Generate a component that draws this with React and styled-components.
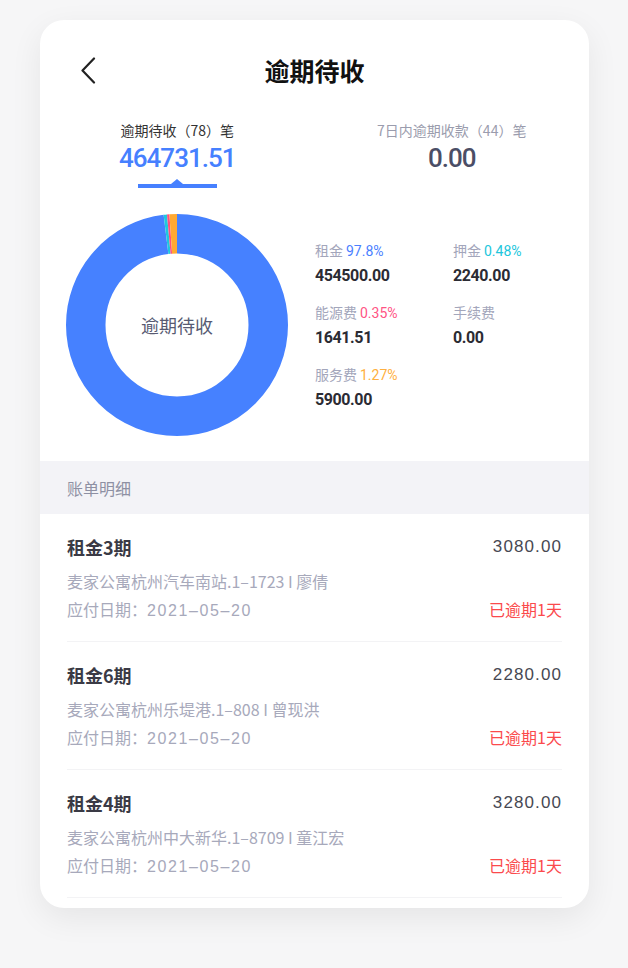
import React from "react";
import styled, { createGlobalStyle } from "styled-components";

const Global = createGlobalStyle`
  html, body { margin: 0; padding: 0; background: #f6f6f7; }
  body { font-family: "Noto Sans CJK SC", "Noto Sans", sans-serif; -webkit-font-smoothing: antialiased; }
  * { box-sizing: border-box; }
`;

const Page = styled.div`
  width: 628px;
  height: 968px;
  padding: 20px 39px 0 40px;
  background: #f6f6f7;
`;

const Card = styled.div`
  width: 549px;
  height: 888px;
  background: #fff;
  border-radius: 24px;
  overflow: hidden;
  box-shadow: 0 10px 32px rgba(0, 0, 0, 0.07);
  display: flex;
  flex-direction: column;
`;

const Header = styled.div`
  position: relative;
  height: 100px;
  display: flex;
  align-items: center;
  justify-content: center;
`;

const Back = styled.button`
  position: absolute;
  left: 38px;
  top: 36px;
  width: 20px;
  height: 28px;
  border: 0;
  padding: 0;
  background: transparent;
  display: flex;
  align-items: center;
  justify-content: center;
`;

const Title = styled.h1`
  margin: 0;
  font-size: 25px;
  font-weight: 700;
  color: #111;
  line-height: 1;
`;

const Tabs = styled.div`
  display: grid;
  grid-template-columns: 1fr 1fr;
`;

const Tab = styled.div`
  display: flex;
  flex-direction: column;
  align-items: center;
`;

const TabLabel = styled.div`
  font-size: 14px;
  line-height: 20px;
  height: 20px;
  color: ${(p) => (p.$active ? "#333" : "#9a9cad")};
`;

const TabValue = styled.div`
  font-family: Roboto, "Liberation Sans", sans-serif;
  font-size: 26px;
  line-height: 36px;
  height: 36px;
  font-weight: 500;
  letter-spacing: -1px;
  color: ${(p) => (p.$active ? "#4680ff" : "#4b4e66")};
`;

const Indicator = styled.div`
  position: relative;
  width: 79px;
  height: 4px;
  margin-top: 8px;
  background: ${(p) => (p.$active ? "#4680ff" : "transparent")};
  &::after {
    content: "";
    display: ${(p) => (p.$active ? "block" : "none")};
    position: absolute;
    left: 50%;
    top: -5px;
    margin-left: -6px;
    border-left: 6px solid transparent;
    border-right: 6px solid transparent;
    border-bottom: 5px solid #4680ff;
  }
`;

const ChartRow = styled.div`
  display: flex;
  align-items: flex-start;
  padding: 26px 0 25px 26px;
`;

const DonutBox = styled.div`
  position: relative;
  width: 222px;
  height: 222px;
  flex: none;
`;

const DonutLabel = styled.div`
  position: absolute;
  inset: 0;
  display: flex;
  align-items: center;
  justify-content: center;
  font-size: 18px;
  color: #585b72;
`;

const Legend = styled.div`
  margin-left: 27px;
  margin-top: 26px;
  display: grid;
  grid-template-columns: 138px 120px;
  row-gap: 15px;
`;

const LegendItem = styled.div`
  display: flex;
  flex-direction: column;
  gap: 5px;
`;

const LegendLabel = styled.div`
  font-size: 14px;
  line-height: 20px;
  height: 20px;
  color: #a3a6bb;
  white-space: nowrap;
`;

const Pct = styled.span`
  font-family: Roboto, "Liberation Sans", sans-serif;
  color: ${(p) => p.$color};
  margin-left: 3px;
`;

const LegendValue = styled.div`
  font-family: Roboto, "Liberation Sans", sans-serif;
  font-size: 16px;
  line-height: 22px;
  height: 22px;
  font-weight: 700;
  letter-spacing: -0.4px;
  color: #2b2b33;
`;

const SectionBar = styled.div`
  height: 53px;
  background: #f3f3f7;
  display: flex;
  align-items: center;
  padding: 0 27px;
  font-size: 16px;
  color: #8e90a3;
`;

const List = styled.div`
  padding: 0 27px;
`;

const Item = styled.div`
  padding: 21px 0 21px;
  border-bottom: 1px solid #f3f3f5;
  display: flex;
  flex-direction: column;
`;

const ItemRow = styled.div`
  display: flex;
  justify-content: space-between;
  align-items: center;
  height: ${(p) => p.$h}px;
  margin-top: ${(p) => p.$mt || 0}px;
`;

const ItemTitle = styled.div`
  font-size: 18px;
  line-height: 24px;
  font-weight: 700;
  color: #3a3a45;
`;

const Amount = styled.div`
  font-family: "Liberation Sans", "Noto Sans", sans-serif;
  font-size: 17px;
  line-height: 24px;
  letter-spacing: 1.1px;
  color: #474852;
`;

const Sub = styled.div`
  font-size: 16px;
  line-height: 22px;
  height: 22px;
  color: #a7a9bb;
  white-space: nowrap;
`;

const DateNum = styled.span`
  font-family: "Liberation Sans", "Noto Sans", sans-serif;
  letter-spacing: 1.6px;
`;

const Overdue = styled.div`
  font-size: 16px;
  line-height: 22px;
  height: 22px;
  color: #fb4a4c;
`;

const ChevronLeft = () => (
  <svg width="16" height="27" viewBox="0 0 16 27" fill="none">
    <path d="M14 1.5 L2.5 13.5 L14 25.5" stroke="#222" strokeWidth="2.2" strokeLinecap="round" strokeLinejoin="round" />
  </svg>
);

const slices = [
  { v: 97.8, c: "#4681ff" },
  { v: 0.48, c: "#1fc8dd" },
  { v: 0.35, c: "#ff4f80" },
  { v: 1.27, c: "#ffa932" },
];

const Donut = () => {
  const r = 91.25;
  const C = 2 * Math.PI * r;
  const total = slices.reduce((s, x) => s + x.v, 0);
  let acc = 0;
  return (
    <svg width="222" height="222" viewBox="0 0 222 222">
      <g transform="rotate(-90 111 111)">
        {slices.map((s, i) => {
          const len = (s.v / total) * C;
          const el = (
            <circle
              key={i}
              cx="111"
              cy="111"
              r={r}
              fill="none"
              stroke={s.c}
              strokeWidth="39.5"
              strokeDasharray={`${len} ${C - len}`}
              strokeDashoffset={-acc}
            />
          );
          acc += len;
          return el;
        })}
      </g>
    </svg>
  );
};

const legend = [
  { label: "租金", pct: "97.8%", color: "#4a80ff", value: "454500.00" },
  { label: "押金", pct: "0.48%", color: "#20c6dc", value: "2240.00" },
  { label: "能源费", pct: "0.35%", color: "#ff5484", value: "1641.51" },
  { label: "手续费", pct: "", color: "", value: "0.00" },
  { label: "服务费", pct: "1.27%", color: "#ffb040", value: "5900.00" },
];

const items = [
  { title: "租金3期", amount: "3080.00", addr: "麦家公寓杭州汽车南站.1–1723 I 廖倩" },
  { title: "租金6期", amount: "2280.00", addr: "麦家公寓杭州乐堤港.1–808 I 曾现洪" },
  { title: "租金4期", amount: "3280.00", addr: "麦家公寓杭州中大新华.1–8709 I 童江宏" },
];

export default function App() {
  return (
    <>
      <Global />
      <Page>
        <Card>
          <Header>
            <Back aria-label="back">
              <ChevronLeft />
            </Back>
            <Title>逾期待收</Title>
          </Header>
          <Tabs>
            <Tab>
              <TabLabel $active>逾期待收（78）笔</TabLabel>
              <TabValue $active>464731.51</TabValue>
              <Indicator $active />
            </Tab>
            <Tab>
              <TabLabel>7日内逾期收款（44）笔</TabLabel>
              <TabValue>0.00</TabValue>
              <Indicator />
            </Tab>
          </Tabs>
          <ChartRow>
            <DonutBox>
              <Donut />
              <DonutLabel>逾期待收</DonutLabel>
            </DonutBox>
            <Legend>
              {legend.map((l) => (
                <LegendItem key={l.label}>
                  <LegendLabel>
                    {l.label}
                    {l.pct && <Pct $color={l.color}>{l.pct}</Pct>}
                  </LegendLabel>
                  <LegendValue>{l.value}</LegendValue>
                </LegendItem>
              ))}
            </Legend>
          </ChartRow>
          <SectionBar>账单明细</SectionBar>
          <List>
            {items.map((it) => (
              <Item key={it.title}>
                <ItemRow $h={24}>
                  <ItemTitle>{it.title}</ItemTitle>
                  <Amount>{it.amount}</Amount>
                </ItemRow>
                <ItemRow $h={22} $mt={11}>
                  <Sub>{it.addr}</Sub>
                </ItemRow>
                <ItemRow $h={22} $mt={6}>
                  <Sub>
                    应付日期：<DateNum>2021–05–20</DateNum>
                  </Sub>
                  <Overdue>已逾期1天</Overdue>
                </ItemRow>
              </Item>
            ))}
          </List>
        </Card>
      </Page>
    </>
  );
}
